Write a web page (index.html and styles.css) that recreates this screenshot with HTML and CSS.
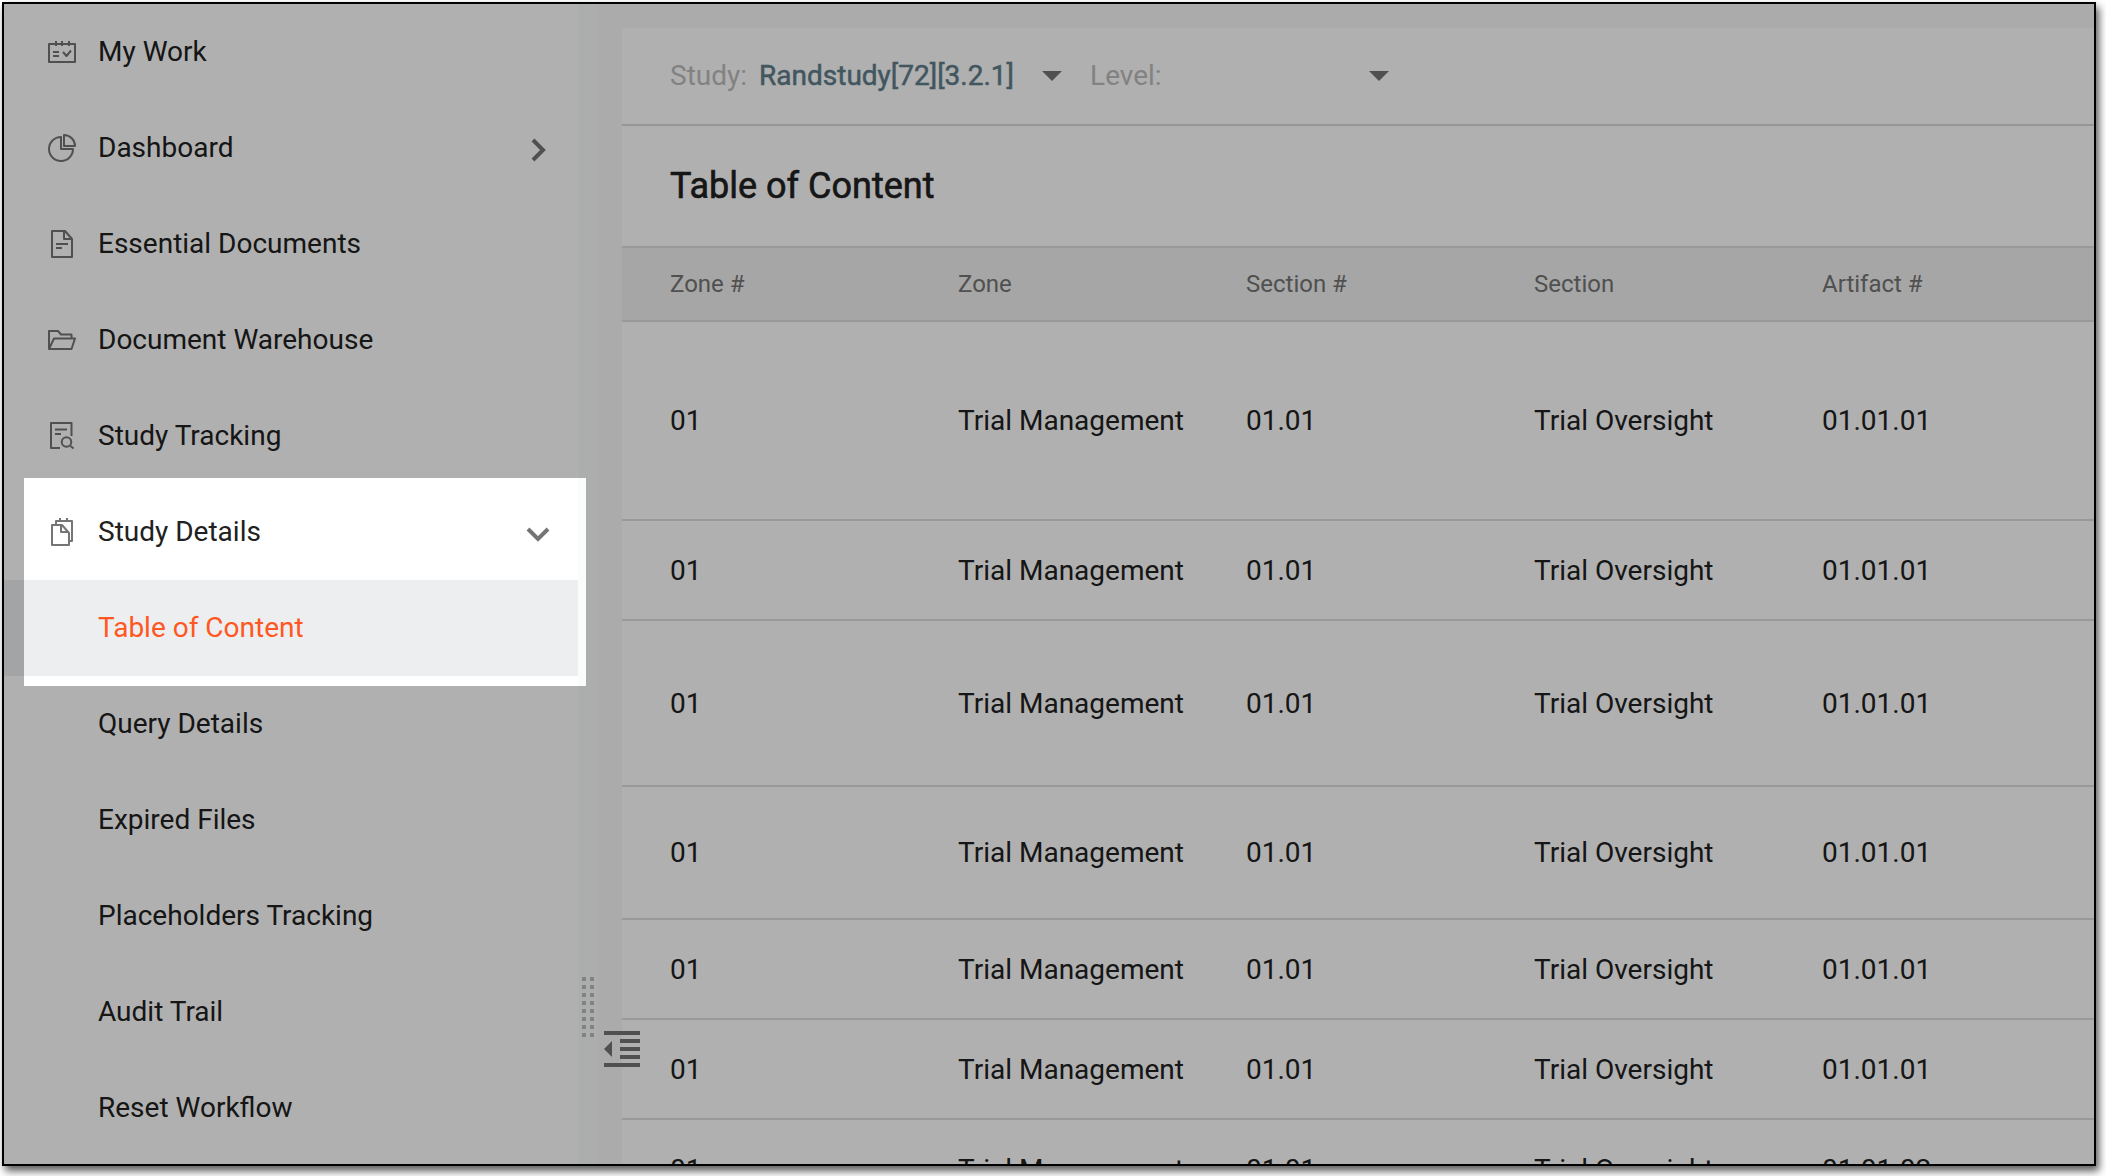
FILE: index.html
```html
<!DOCTYPE html>
<html lang="en">
<head>
  <title>Table of Content</title>
  <meta charset="utf-8">
  <meta name="viewport" content="width=device-width, initial-scale=1">
  <link rel="stylesheet" href="styles.css">
</head>
<body>
  <div class="frame">
    <nav class="sidebar">
      <ul class="menu">
        <li class="menu-item">
          <svg class="icon" viewBox="0 0 28 28"><path d="M1 6h26v18H1zM8 3v5M14 3v5M21 3v5M5 14h6M5 18h6M15 14l3.500 4L23 12.500"/></svg>
          <span>My Work</span>
        </li>
        <li class="menu-item">
          <svg class="icon" viewBox="0 0 28 28"><path d="M13 3A12 12 0 1 0 25 15H13zM16 1v11h11A11 11 0 0 0 16 1z"/></svg>
          <span>Dashboard</span>
          <svg class="arrow" viewBox="0 0 24 24"><path d="M7 2l10 10L7 22"/></svg>
        </li>
        <li class="menu-item">
          <svg class="icon" viewBox="0 0 28 28"><path d="M4 1h13l7 8v18H4zM16 1v8h8M8 14h12M8 18h6"/></svg>
          <span>Essential Documents</span>
        </li>
        <li class="menu-item">
          <svg class="icon" viewBox="0 0 28 28"><path d="M1 23V5h9l3 3.500h10.500V12M1 23h22.500L27 12.500H6L1 23z"/></svg>
          <span>Document Warehouse</span>
        </li>
        <li class="menu-item">
          <svg class="icon" viewBox="0 0 28 28"><path d="M23.500 14V1H3v25h9M7 7.500h12M7 12h6M22.500 24l3 2.500"/><circle cx="18.500" cy="20" r="4.800"/></svg>
          <span>Study Tracking</span>
        </li>
        <li class="menu-item">
          <svg class="icon" viewBox="0 0 28 28"><path d="M4 7h10l7 8v12H4zM13 7v7h7M8 7V3h16v20h-3M12 0v4M19 0v4"/></svg>
          <span>Study Details</span>
          <svg class="arrow" viewBox="0 0 24 24"><path d="M2 7l10 10L22 7"/></svg>
        </li>
        <li class="menu-item active"><span>Table of Content</span></li>
        <li class="menu-item"><span>Query Details</span></li>
        <li class="menu-item"><span>Expired Files</span></li>
        <li class="menu-item"><span>Placeholders Tracking</span></li>
        <li class="menu-item"><span>Audit Trail</span></li>
        <li class="menu-item"><span>Reset Workflow</span></li>
      </ul>
    </nav>
    <div class="splitter"><div class="grip"></div></div>
    <main class="content">
      <div class="filters">
        <span class="filter-label">Study:</span>
        <span class="filter-value">Randstudy[72][3.2.1]</span>
        <span class="caret"></span>
        <span class="filter-label level">Level:</span>
        <span class="caret"></span>
      </div>
      <h1 class="title">Table of Content</h1>
      <div class="row head"><span>Zone #</span><span>Zone</span><span>Section #</span><span>Section</span><span>Artifact #</span></div>
      <div class="row row-xl"><span>01</span><span>Trial Management</span><span>01.01</span><span>Trial Oversight</span><span>01.01.01</span></div>
      <div class="row"><span>01</span><span>Trial Management</span><span>01.01</span><span>Trial Oversight</span><span>01.01.01</span></div>
      <div class="row row-lg"><span>01</span><span>Trial Management</span><span>01.01</span><span>Trial Oversight</span><span>01.01.01</span></div>
      <div class="row row-md"><span>01</span><span>Trial Management</span><span>01.01</span><span>Trial Oversight</span><span>01.01.01</span></div>
      <div class="row"><span>01</span><span>Trial Management</span><span>01.01</span><span>Trial Oversight</span><span>01.01.01</span></div>
      <div class="row"><span>01</span><span>Trial Management</span><span>01.01</span><span>Trial Oversight</span><span>01.01.01</span></div>
      <div class="row"><span>01</span><span>Trial Management</span><span>01.01</span><span>Trial Oversight</span><span>01.01.02</span></div>
    </main>
    <svg class="collapse" viewBox="0 0 36 36"><path d="M0 0h36v4H0zM16 8h20v4H16zM16 16h20v4H16zM16 24h20v4H16zM0 32h36v4H0zM0 18l8-8v16z"/></svg>
    <div class="spotlight"></div>
  </div>
</body>
</html>
```
FILE: styles.css
```css
*, *::before, *::after {
  margin: 0;
  padding: 0;
  box-sizing: border-box;
}

body {
  height: 1176px;
  padding: 2px;
  background-color: #FFFFFF;
  color: #212121;
  font-family: "Roboto", sans-serif;
  font-size: 28px;
  overflow: hidden;
}

.frame {
  position: relative;
  display: flex;
  width: 2094px;
  height: 1164px;
  border: 2px solid #000000;
  background-color: #F8F8F8;
  box-shadow: 3px 5px 8px rgba(0, 0, 0, 0.65);
  overflow: hidden;
}

.sidebar {
  flex: 0 0 574px;
  background-color: #FFFFFF;
}

.menu {
  list-style: none;
}

.menu-item {
  display: flex;
  align-items: center;
  height: 96px;
  padding: 0 28px 2px 44px;
}

.menu-item span {
  margin-left: 50px;
}

.icon {
  width: 28px;
  height: 28px;
  margin-top: 2px;
  fill: none;
  stroke: #757575;
  stroke-width: 2;
  stroke-linejoin: round;
}

.menu-item .icon + span {
  margin-left: 22px;
}

.arrow {
  width: 24px;
  height: 24px;
  margin-top: 6px;
  margin-left: auto;
  fill: none;
  stroke: #757575;
  stroke-width: 4;
}

.active {
  background-color: #EDEEF0;
  color: #FF5722;
}

.splitter {
  flex: 0 0 20px;
  padding: 973px 0 0 4px;
  background-color: #F9FCFB;
}

.grip {
  width: 12px;
  height: 60px;
  background-image: conic-gradient(at 4px 4px, transparent 270deg, #BDBDBD 0);
  background-size: 8px 8px;
}

.content {
  flex: 1;
  margin: 24px 0 0 24px;
  background-color: #FFFFFF;
}

.filters {
  display: flex;
  align-items: center;
  height: 98px;
  padding: 0 48px;
  border-bottom: 2px solid #DADADA;
}

.filter-label,
.filter-value {
  padding-bottom: 2px;
}

.filter-label {
  color: #BDBDBD;
}

.filter-value {
  width: 255px;
  margin: 0 28px 0 12px;
  color: #607D8B;
  white-space: nowrap;
  -webkit-text-stroke: 0.5px currentColor;
}

.caret {
  border: 10px solid transparent;
  border-top-color: #757575;
  border-bottom: 0;
}

.level {
  width: 279px;
  margin-left: 28px;
}

.title {
  height: 122px;
  padding-left: 48px;
  border-bottom: 2px solid #DEDEDE;
  font-size: 36px;
  font-weight: 400;
  line-height: 121px;
  -webkit-text-stroke: 0.6px currentColor;
}

.row {
  display: grid;
  grid-template-columns: repeat(5, 288px);
  align-items: center;
  height: 100px;
  padding-left: 48px;
  border-bottom: 2px solid #DEDEDE;
}

.row-xl {
  height: 199px;
}

.row-lg {
  height: 166px;
}

.row-md {
  height: 133px;
}

.head {
  height: 74px;
  background-color: #F1F1F1;
  color: #757575;
  font-size: 24px;
}

.collapse {
  position: absolute;
  left: 600px;
  top: 1027px;
  width: 36px;
  height: 36px;
  fill: #757575;
}

/* dims everything around the highlighted menu items */
.spotlight {
  position: absolute;
  left: 20px;
  top: 474px;
  width: 562px;
  height: 208px;
  box-shadow: 0 0 0 2200px rgba(0, 0, 0, 0.31);
}
```
